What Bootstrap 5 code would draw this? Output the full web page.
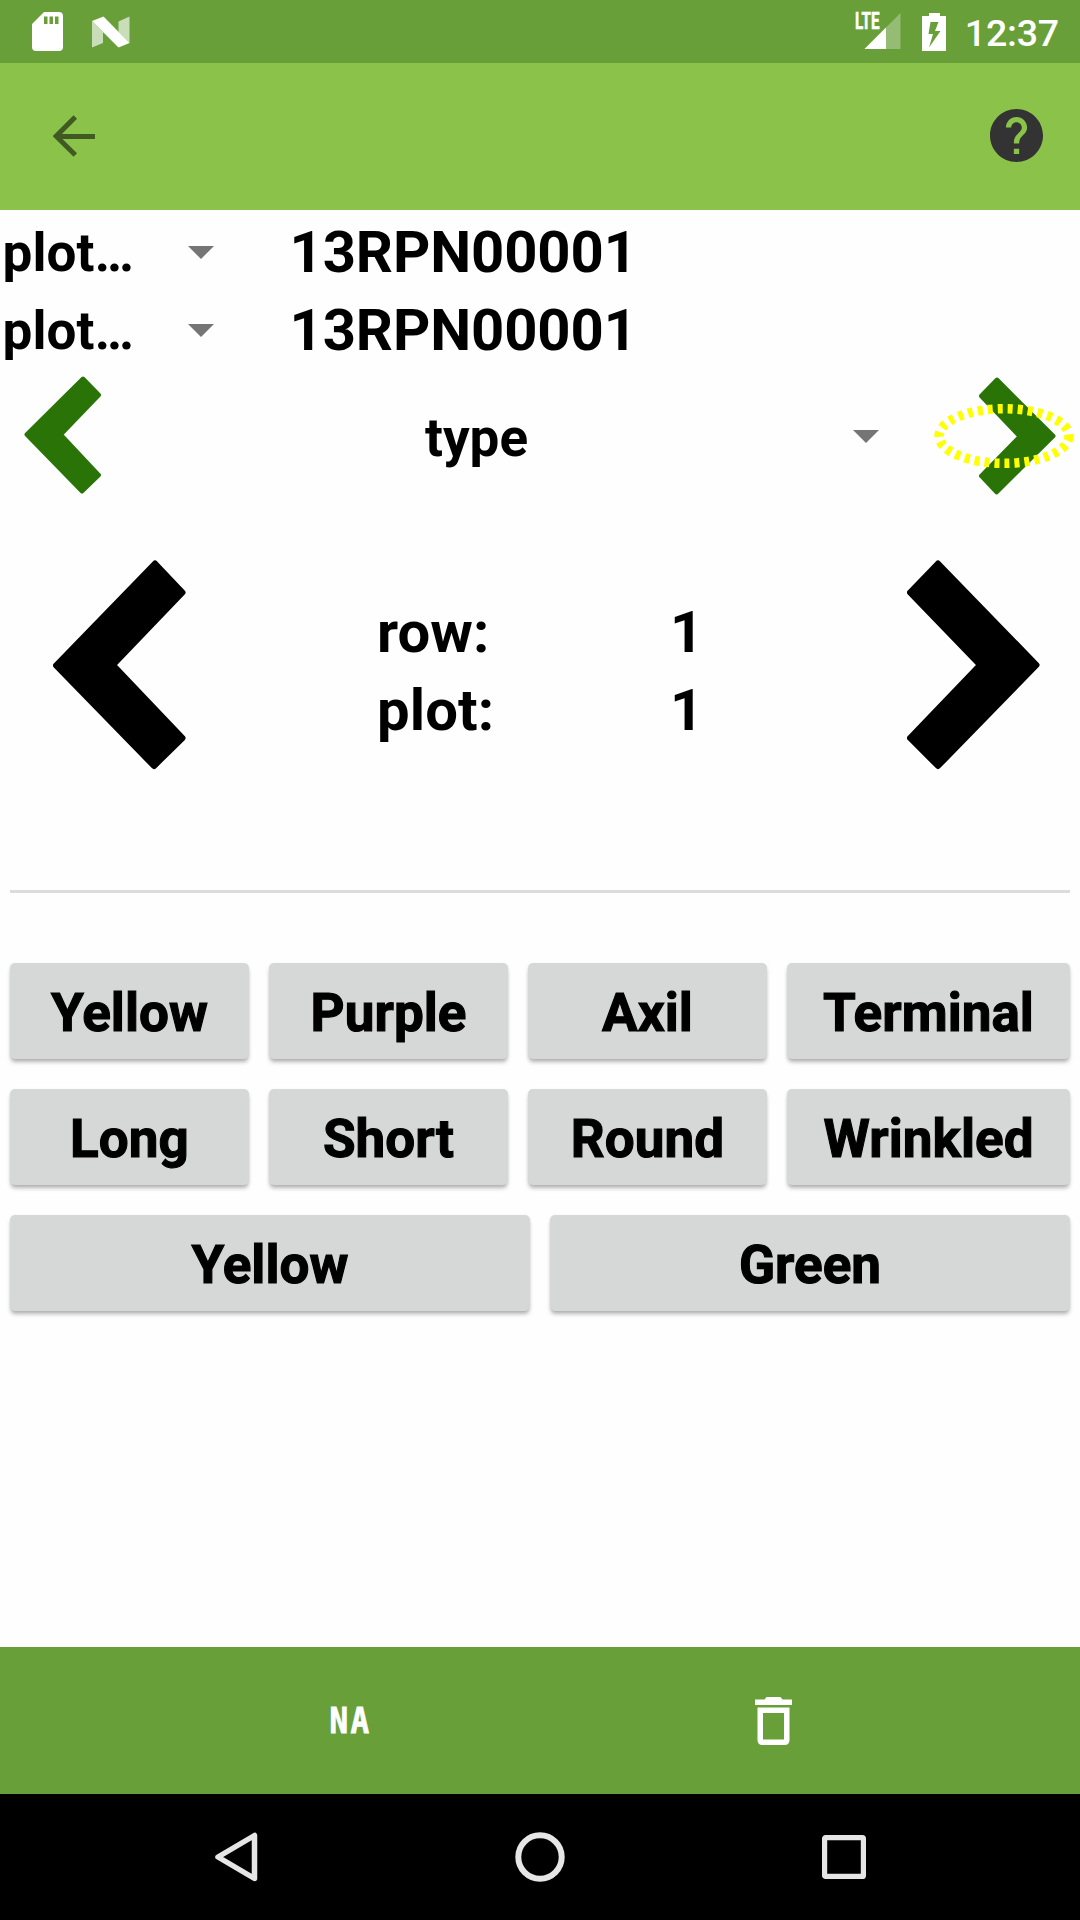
<!DOCTYPE html>
<html lang="en">
<head>
<meta charset="utf-8">
<meta name="viewport" content="width=device-width, initial-scale=1">
<title>Field Book</title>
<link href="https://cdn.jsdelivr.net/npm/bootstrap@5.3.0/dist/css/bootstrap.min.css" rel="stylesheet">
<style>
body{font-family:Roboto,"Liberation Sans",sans-serif;color:#000;background:#fefefe;width:1080px;height:1920px;overflow:hidden}
svg{display:block;flex:none}
.screen{height:1920px}
.statusbar{height:63px;background:#689f38;color:#fff;padding:0 21px 0 32px}
.sb-left{gap:29px}
.clock{font-size:37.500px;font-weight:500;line-height:63px;padding-top:3px;letter-spacing:-.2px}
.signal{width:48px;height:63px;margin-right:20px}
.battery{margin-right:13px}
.lte{left:1px;top:10px;font-size:23px;line-height:24px;font-weight:700;-webkit-text-stroke:.6px #fff;transform:scaleX(.66);transform-origin:0 0}
.appbar{height:147px;background:#8bc34a;padding:0 37px 2px 53px}
.info{padding-top:3px}
.inforow{height:78px;padding-left:2.500px}
.spin-label{width:185.500px;font-size:53px;font-weight:700;line-height:78px;padding-top:2px;letter-spacing:.1px}
.plotid{font-size:58px;font-weight:700;line-height:78px;margin-left:75.500px;letter-spacing:-.1px}
.traitrow{height:136px;padding:0 24px}
.trait-prev{margin-bottom:5px}
.traitname{width:375px;margin-left:188px;font-size:53px;font-weight:700;line-height:136px;padding-top:1px}
.trait-caret{margin-bottom:1px}
.trait-next{margin-left:100px;margin-bottom:2px}
.overlay-ring{left:-46.500px;top:24px}
.plotnav{height:385px;padding:55px 40px 0 53px}
.rangebox{padding-top:33px;width:416px;margin-left:191px;font-size:58px;font-weight:700;line-height:78px}
.rangelabel{width:293px;letter-spacing:.1px}
.divider{height:3px;margin:0 10px;background:#dcdcdc}
.choices{padding:70px 10px 0;gap:30px}
.choicerow{gap:20px}
.choice{height:96px;border:0;border-radius:5px;background:#d6d7d7;color:#000;font-size:53px;font-weight:700;line-height:92px;padding:4px 0 0;letter-spacing:.05px;-webkit-text-stroke:1.100px #000;box-shadow:0 4px 4px -1px rgba(0,0,0,.28),0 1px 4px -1px rgba(0,0,0,.12)}
.choice:hover{background:#d6d7d7}
.c-sm{width:239px}.c-lg{width:283px}.c-half{width:520px}
.actionbar{height:147px;background:#689f38;color:#fff;padding:0 288px 0 328px}
.na{font:700 36px/147px "DejaVu Sans Mono",monospace;letter-spacing:-.7px;-webkit-text-stroke:.8px #fff}
.na span{display:inline-block;transform:scaleX(.86)}
.navbar3{height:126px;background:#000;padding:0 214px 0 214px}
</style>
</head>
<body>
<div class="screen d-flex flex-column">
  <header class="statusbar d-flex justify-content-between align-items-center">
    <div class="sb-left d-flex align-items-center">
      <svg width="31" height="39" viewBox="0 0 31 39"><path fill="#fff" fill-rule="evenodd" d="M12 0H27Q31 0 31 4V35Q31 39 27 39H4Q0 39 0 35V12ZM12 4.500V12H15.500V4.500ZM17.500 4.500V12H21V4.500ZM23 4.500V12H26.500V4.500Z"/></svg>
      <svg width="38" height="32" viewBox="0 0 38 32"><path fill="#fff" fill-opacity=".65" d="M0 5L11 16V27L0 31.500ZM26.500 5.500L37.500 .5V27L26.500 16Z"/><path fill="#fff" d="M0 5L11.500 .5L37.500 27L26.500 31.500Z"/></svg>
    </div>
    <div class="d-flex align-items-center">
      <div class="signal position-relative">
        <svg width="48" height="63" viewBox="0 0 48 63"><path fill="#fff" fill-opacity=".3" d="M46.500 13V49H10.500Z"/><path fill="#fff" d="M32 27.500V49H10.500Z"/></svg>
        <span class="lte position-absolute">LTE</span>
      </div>
      <svg class="battery" width="30" height="38" viewBox="0 0 30 38"><path fill="#fff" fill-rule="evenodd" d="M7 0H18V3H24V38H0V3H7ZM8.500 9L6.500 21H11L7 34.500L18.500 18H13L16.500 9Z"/></svg>
      <span class="clock">12:37</span>
    </div>
  </header>
  <nav class="appbar d-flex justify-content-between align-items-center">
    <svg width="42" height="42" viewBox="0 0 42 42" fill="none" stroke="#415a23" stroke-width="5"><path d="M42 21.500H5M22.300 2L3.200 21.200L22.300 40"/></svg>
    <svg width="53" height="53" viewBox="2 2 20 20"><path fill="#333" d="M12 2C6.480 2 2 6.480 2 12s4.480 10 10 10 10-4.480 10-10S17.520 2 12 2zm1 17h-2v-2h2v2zm2.070-7.750l-.9.920C13.450 12.900 13 13.500 13 15h-2v-.5c0-1.100.45-2.100 1.170-2.830l1.240-1.260c.37-.36.59-.86.59-1.410 0-1.100-.9-2-2-2s-2 .9-2 2H8c0-2.210 1.790-4 4-4s4 1.790 4 4c0 .88-.36 1.680-.93 2.250z"/></svg>
  </nav>
  <main class="flex-grow-1">
    <section class="info">
      <div class="inforow d-flex align-items-center">
        <span class="spin-label">plot…</span>
        <svg width="26" height="13" viewBox="0 0 26 13"><path fill="#757575" d="M0 0H26L13 13Z"/></svg>
        <span class="plotid">13RPN00001</span>
      </div>
      <div class="inforow d-flex align-items-center">
        <span class="spin-label">plot…</span>
        <svg width="26" height="13" viewBox="0 0 26 13"><path fill="#757575" d="M0 0H26L13 13Z"/></svg>
        <span class="plotid">13RPN00001</span>
      </div>
    </section>
    <section class="traitrow d-flex align-items-center">
      <svg class="trait-prev" width="77" height="118" viewBox="0 0 77 118"><path fill="#2a7307" stroke="#2a7307" stroke-width="4" stroke-linejoin="round" d="M59 2.500L75 19L37 58.500L75 99L58 115.500L2.500 58.500Z"/></svg>
      <span class="traitname text-center">type</span>
      <svg class="trait-caret ms-auto" width="26" height="13" viewBox="0 0 26 13"><path fill="#757575" d="M0 0H26L13 13Z"/></svg>
      <div class="trait-next position-relative">
        <svg width="77" height="118" viewBox="0 0 77 118"><path fill="#2a7307" stroke="#2a7307" stroke-width="4" stroke-linejoin="round" d="M18 2.500L2 19L40.500 59.500L2 99L17.500 115.500L74.500 59Z"/></svg>
        <svg class="overlay-ring position-absolute" width="142" height="70" viewBox="0 0 142 70"><ellipse cx="71" cy="35" rx="65" ry="27.300" fill="none" stroke="#ff0" stroke-width="9.500" stroke-dasharray="5 5"/></svg>
      </div>
    </section>
    <section class="plotnav d-flex align-items-start">
      <svg width="133" height="210" viewBox="0 0 133 210"><path fill="#000" stroke="#000" stroke-width="6" stroke-linejoin="round" d="M102 3.500L129.500 32.500L60 105L129.500 178L101 206L3 105.500Z"/></svg>
      <div class="rangebox">
        <div class="d-flex"><span class="rangelabel">row:</span><span>1</span></div>
        <div class="d-flex"><span class="rangelabel">plot:</span><span>1</span></div>
      </div>
      <svg class="ms-auto" width="133" height="210" viewBox="0 0 133 210"><path fill="#000" stroke="#000" stroke-width="6" stroke-linejoin="round" d="M31 3.500L3 32.500L73 105L3 178L31 206L129.500 105Z"/></svg>
    </section>
    <div class="divider"></div>
    <section class="choices d-flex flex-column">
      <div class="choicerow d-flex">
        <button class="btn choice c-sm">Yellow</button><button class="btn choice c-sm">Purple</button><button class="btn choice c-sm">Axil</button><button class="btn choice c-lg">Terminal</button>
      </div>
      <div class="choicerow d-flex">
        <button class="btn choice c-sm">Long</button><button class="btn choice c-sm">Short</button><button class="btn choice c-sm">Round</button><button class="btn choice c-lg">Wrinkled</button>
      </div>
      <div class="choicerow d-flex">
        <button class="btn choice c-half">Yellow</button><button class="btn choice c-half">Green</button>
      </div>
    </section>
  </main>
  <div class="actionbar d-flex justify-content-between align-items-center">
    <div class="na"><span>N</span><span>A</span></div>
    <svg width="37" height="48" viewBox="0 0 37 48"><path fill="#fff" fill-rule="evenodd" d="M0 2.500H9.500L11.500 0H25.500L27.500 2.500H37V8H0ZM2.500 10.500H34.500V43Q34.500 48 29.500 48H7.500Q2.500 48 2.500 43ZM8 16V42.500H29V16Z"/></svg>
  </div>
  <footer class="navbar3 d-flex justify-content-between align-items-center">
    <svg width="44" height="50" viewBox="0 0 44 50"><path fill="none" stroke="#e6e6e6" stroke-width="5.500" stroke-linejoin="round" d="M40.500 3.500V46.500L4 25Z"/></svg>
    <svg width="50" height="50" viewBox="0 0 50 50"><circle cx="25" cy="25" r="21.700" fill="none" stroke="#e6e6e6" stroke-width="6"/></svg>
    <svg width="44" height="44" viewBox="0 0 44 44"><rect x="2.600" y="2.600" width="38.800" height="38.800" rx="1" fill="none" stroke="#e6e6e6" stroke-width="5.200"/></svg>
  </footer>
</div>
<script src="https://cdn.jsdelivr.net/npm/bootstrap@5.3.0/dist/js/bootstrap.bundle.min.js"></script>
</body>
</html>
